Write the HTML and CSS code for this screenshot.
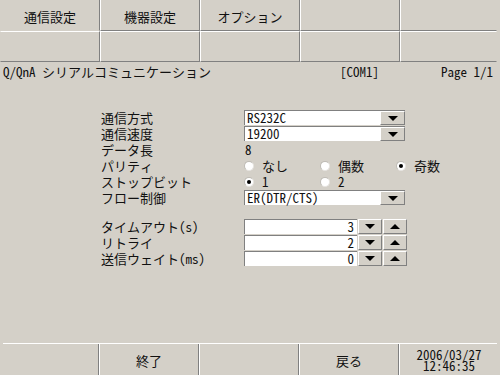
FILE: index.html
```html
<!DOCTYPE html>
<html lang="ja">
<head>
<meta charset="utf-8">
<link rel="stylesheet" href="styles.css">
</head>
<body>
<div class="screen">
  <div class="tabs">
    <div class="tab sel">通信設定</div>
    <div class="tab">機器設定</div>
    <div class="tab">オプション</div>
    <div class="tab"></div>
    <div class="tab last"></div>
    <div class="sub"></div>
    <div class="sub"></div>
    <div class="sub"></div>
    <div class="sub"></div>
    <div class="sub last"></div>
  </div>
  <div class="status">
    <span>Q/QnA シリアルコミュニケーション</span>
    <span>[COM1]</span>
    <span>Page 1/1</span>
  </div>
  <div class="form">
    <div class="row"><span class="label">通信方式</span><div class="select"><span class="val">RS232C</span><span class="btn"><i class="down"></i></span></div></div>
    <div class="row"><span class="label">通信速度</span><div class="select"><span class="val">19200</span><span class="btn"><i class="down"></i></span></div></div>
    <div class="row"><span class="label">データ長</span><span class="plain">8</span></div>
    <div class="row"><span class="label">パリティ</span>
      <span class="radio"><i class="dot"></i>なし</span>
      <span class="radio"><i class="dot"></i>偶数</span>
      <span class="radio on"><i class="dot"></i>奇数</span>
    </div>
    <div class="row"><span class="label">ストップビット</span>
      <span class="radio on"><i class="dot"></i>1</span>
      <span class="radio"><i class="dot"></i>2</span>
    </div>
    <div class="row"><span class="label">フロー制御</span><div class="select"><span class="val">ER(DTR/CTS)</span><span class="btn"><i class="down"></i></span></div></div>
    <div class="row gap"><span class="label">タイムアウト(s)</span><div class="spin"><span class="field">3</span><span class="sbtn"><i class="down"></i></span><span class="sbtn"><i class="up"></i></span></div></div>
    <div class="row"><span class="label">リトライ</span><div class="spin"><span class="field">2</span><span class="sbtn"><i class="down"></i></span><span class="sbtn"><i class="up"></i></span></div></div>
    <div class="row"><span class="label">送信ウェイト(ms)</span><div class="spin"><span class="field">0</span><span class="sbtn"><i class="down"></i></span><span class="sbtn"><i class="up"></i></span></div></div>
  </div>
  <div class="bottom">
    <div class="cell"></div>
    <div class="cell">終了</div>
    <div class="cell"></div>
    <div class="cell">戻る</div>
    <div class="cell last date">2006/03/27<br>12:46:35</div>
  </div>
</div>
</body>
</html>
```
FILE: styles.css
```css
html, body {
  margin: 0;
  padding: 0;
  background: #d4d0c8;
}
body {
  font-family: "Noto Sans Mono CJK JP", "Noto Sans CJK JP", "DejaVu Sans Mono", monospace;
  font-size: 13px;
  color: #111;
}
.screen {
  width: 500px;
  height: 375px;
  display: flex;
  flex-direction: column;
  overflow: hidden;
}
.tabs {
  display: grid;
  grid-template-columns: 100px 100px 100px 100px 100px;
  grid-template-rows: 31px 31px;
}
.tab {
  box-sizing: border-box;
  border-right: 1px solid #808080;
  border-left: 1px solid #fff;
  border-bottom: 1px solid #808080;
  display: flex;
  align-items: center;
  justify-content: center;
  padding-top: 2px;
}
.tab.sel {
  border-left-color: transparent;
  border-bottom-color: transparent;
}
.sub {
  box-sizing: border-box;
  border-top: 1px solid #fff;
  border-right: 1px solid #808080;
  border-left: 1px solid #fff;
  border-bottom: 1px solid #808080;
}
.sub:first-of-type, .tabs .sub:nth-child(6) {
  border-left-color: transparent;
}
.tab.last, .sub.last {
  border-right-color: transparent;
  margin-right: 3px;
}
.status {
  display: grid;
  grid-template-columns: 337px 1fr auto;
  padding: 2px 7px 0 3px;
  height: 18px;
  line-height: 16px;
}
.form {
  display: flex;
  flex-direction: column;
  padding-left: 101px;
  margin-top: 28px;
}
.row {
  display: flex;
  align-items: center;
  height: 16px;
  line-height: 16px;
}
.row.gap {
  margin-top: 13px;
}
.label {
  width: 143px;
  flex: none;
}
.plain {
  padding-left: 1px;
}
.select {
  box-sizing: border-box;
  width: 161px;
  height: 15px;
  display: flex;
  background: #fff;
  border-top: 1px solid #808080;
  border-left: 1px solid #808080;
  margin-top: -1px;
}
.val {
  flex: 1;
  padding-left: 2px;
  line-height: 14px;
}
.btn, .sbtn {
  box-sizing: border-box;
  width: 25px;
  height: 14px;
  background: #d4d0c8;
  border: 1px solid;
  border-color: #fff #808080 #808080 #fff;
  display: flex;
  align-items: center;
  justify-content: center;
}
.down {
  width: 0;
  height: 0;
  border-left: 5px solid transparent;
  border-right: 5px solid transparent;
  border-top: 5px solid #000;
}
.up {
  width: 0;
  height: 0;
  border-left: 5px solid transparent;
  border-right: 5px solid transparent;
  border-bottom: 5px solid #000;
}
.radio {
  display: flex;
  align-items: center;
  width: 76px;
  flex: none;
}
.dot {
  box-sizing: border-box;
  width: 10px;
  height: 10px;
  border-radius: 50%;
  background: #fff;
  border: 1px solid #e6e4e0;
  border-top-color: #bdbab4;
  border-left-color: #bdbab4;
  margin-right: 8px;
  display: flex;
  align-items: center;
  justify-content: center;
}
.radio.on .dot::after {
  content: "";
  width: 4px;
  height: 4px;
  border-radius: 50%;
  background: #000;
}
.spin {
  display: flex;
  height: 15px;
  margin-top: -1px;
}
.field {
  box-sizing: border-box;
  width: 113px;
  height: 15px;
  background: #fff;
  border-top: 1px solid #808080;
  border-left: 1px solid #808080;
  text-align: right;
  padding-right: 3px;
  line-height: 14px;
}
.sbtn {
  width: 24px;
  height: 15px;
  margin-left: 1px;
}
.bottom {
  margin-top: auto;
  margin-left: 3px;
  margin-right: 3px;
  border-top: 1px solid #fff;
  display: grid;
  grid-template-columns: 96px 100px 100px 100px 98px;
  height: 31px;
}
.cell {
  box-sizing: border-box;
  border-right: 1px solid #808080;
  border-left: 1px solid #fff;
  display: flex;
  align-items: center;
  justify-content: center;
  padding-top: 2px;
}
.cell:first-child {
  border-left-color: transparent;
}
.cell.last {
  border-right-color: transparent;
}
.date {
  line-height: 11px;
  text-align: center;
  padding-top: 0;
  padding-left: 2px;
}
```
